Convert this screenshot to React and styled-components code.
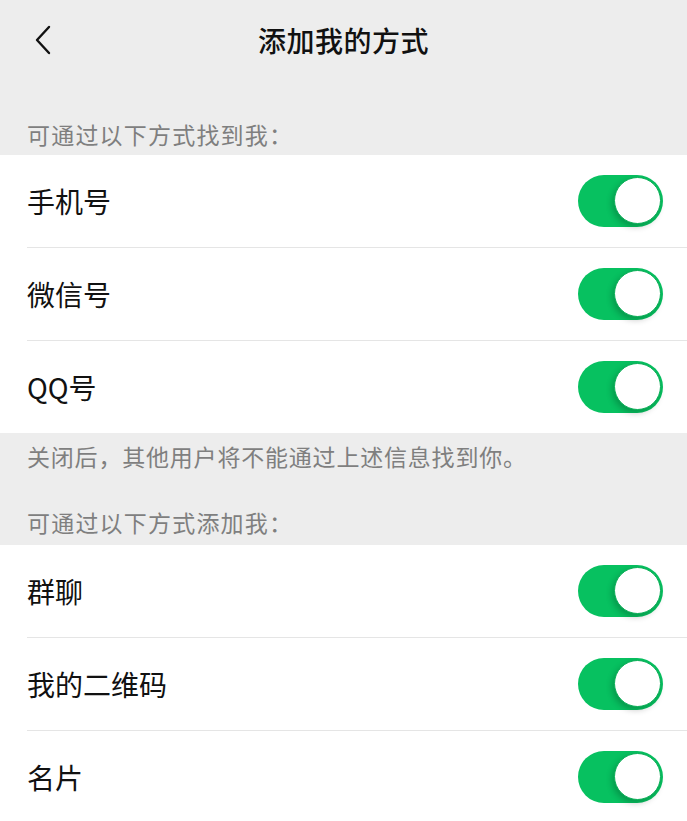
import React from "react";
import styled, { createGlobalStyle } from "styled-components";

const GlobalStyle = createGlobalStyle`
  html, body {
    margin: 0;
    padding: 0;
    background: #ededed;
  }
  body {
    font-family: "Noto Sans CJK SC", "Noto Sans", sans-serif;
    -webkit-font-smoothing: antialiased;
  }
`;

const Page = styled.div`
  width: 687px;
  min-height: 821px;
  background: #ededed;
  overflow: hidden;
`;

const NavBar = styled.div`
  position: relative;
  height: 80px;
  display: flex;
  align-items: center;
  justify-content: center;
`;

const BackButton = styled.button`
  position: absolute;
  left: 26px;
  top: 20px;
  width: 34px;
  height: 40px;
  padding: 0;
  border: none;
  background: transparent;
  display: flex;
  align-items: center;
  justify-content: center;
`;

const Title = styled.h1`
  margin: 0;
  font-size: 28px;
  font-weight: 500;
  color: #111;
  letter-spacing: 0.5px;
`;

const SectionTitle = styled.div`
  padding: ${(p) => (p.$first ? "40px 27px 7px" : "38px 27px 9px")};
  font-size: 23px;
  line-height: 28px;
  letter-spacing: 1.2px;
  color: #7f7f7f;
`;

const Note = styled.div`
  padding: 9px 27px 0;
  font-size: 23px;
  line-height: 28px;
  letter-spacing: 0.8px;
  color: #7f7f7f;
`;

const List = styled.div`
  background: #fff;
`;

const Row = styled.div`
  height: 92px;
  display: flex;
  align-items: center;
  justify-content: space-between;
  padding: 0 24px 0 27px;
  position: relative;

  & + & {
    border-top: 1px solid transparent;
  }

  & + &::before {
    content: "";
    position: absolute;
    left: 27px;
    right: 0;
    top: -1px;
    height: 1px;
    background: #e5e5e5;
  }
`;

const Label = styled.span`
  font-size: 28px;
  color: #111;
`;

const Track = styled.div`
  position: relative;
  width: 85px;
  height: 52px;
  border-radius: 26px;
  background: ${(p) => (p.$on ? "#07c160" : "#e5e5e5")};
  flex-shrink: 0;
`;

const Knob = styled.div`
  position: absolute;
  top: 2px;
  ${(p) => (p.$on ? "right: 2px;" : "left: 2px;")}
  width: 47px;
  height: 47px;
  border-radius: 50%;
  background: #fff;
  border: 1px solid #0aae57;
  box-sizing: border-box;
  box-shadow: -2px 3px 6px rgba(0, 0, 0, 0.22);
`;

function Toggle({ on }) {
  return (
    <Track $on={on}>
      <Knob $on={on} />
    </Track>
  );
}

function BackIcon() {
  return (
    <svg width="20" height="30" viewBox="0 0 20 30" fill="none">
      <path d="M16 2 L4 15 L16 28" stroke="#111" strokeWidth="2.4" strokeLinecap="round" strokeLinejoin="round" />
    </svg>
  );
}

const findMe = ["手机号", "微信号", "QQ号"];
const addMe = ["群聊", "我的二维码", "名片"];

export default function App() {
  return (
    <Page>
      <GlobalStyle />
      <NavBar>
        <BackButton aria-label="返回">
          <BackIcon />
        </BackButton>
        <Title>添加我的方式</Title>
      </NavBar>

      <SectionTitle $first>可通过以下方式找到我：</SectionTitle>
      <List>
        {findMe.map((t) => (
          <Row key={t}>
            <Label>{t}</Label>
            <Toggle on />
          </Row>
        ))}
      </List>
      <Note>关闭后，其他用户将不能通过上述信息找到你。</Note>

      <SectionTitle>可通过以下方式添加我：</SectionTitle>
      <List>
        {addMe.map((t) => (
          <Row key={t}>
            <Label>{t}</Label>
            <Toggle on />
          </Row>
        ))}
      </List>
    </Page>
  );
}
